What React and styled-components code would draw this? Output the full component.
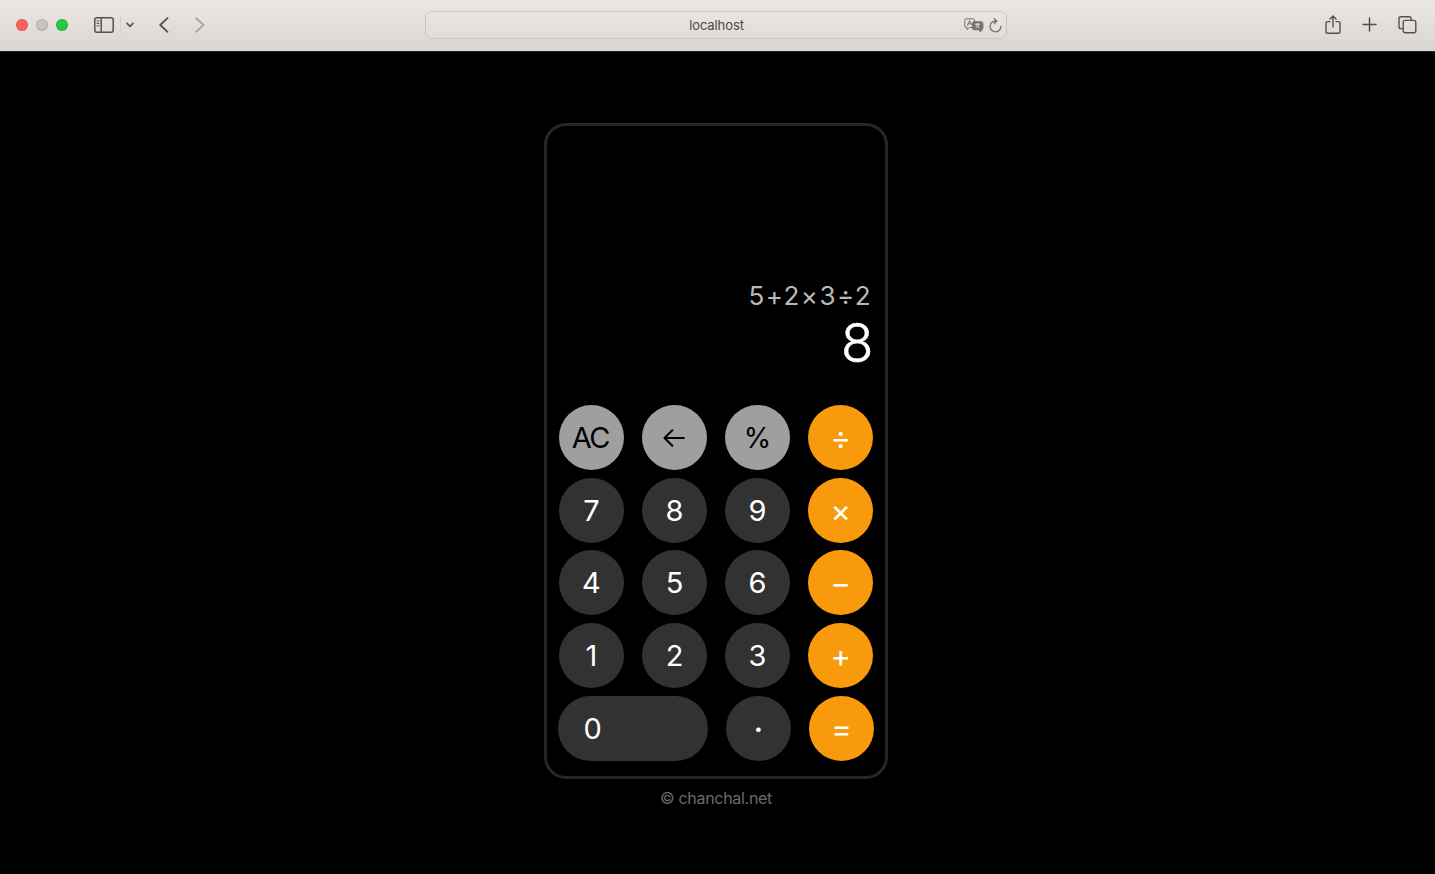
import React from "react";
import styled, { createGlobalStyle } from "styled-components";

const GlobalStyle = createGlobalStyle`
  * { box-sizing: border-box; }
  html, body { margin: 0; background: #000; }
  body { font-family: Inter, "Liberation Sans", sans-serif; overflow: hidden; }
  button { font: inherit; border: 0; padding: 0; }
`;

const Page = styled.div`
  height: 100vh;
  display: flex;
  flex-direction: column;
`;

const Toolbar = styled.header`
  flex: none;
  height: 52px;
  padding: 0 18px 2px 16px;
  display: grid;
  grid-template-columns: 1fr 582px 1fr;
  align-items: center;
  background: linear-gradient(#ebe6e4, #dbd5d2);
  border-bottom: 1px solid #222;
`;

const ToolGroup = styled.div`
  display: flex;
  align-items: center;
  justify-content: ${(p) => (p.$end ? "flex-end" : "flex-start")};
`;

const Lights = styled.div`
  display: flex;
  gap: 8px;
  margin: 1px 26px 0 0;
`;

const Light = styled.span`
  width: 12px;
  height: 12px;
  border-radius: 50%;
  background: ${(p) => p.$color};
  border: 0.5px solid rgba(0, 0, 0, 0.12);
`;

const Divider = styled.span`
  width: 1px;
  height: 18px;
  margin: 0 5px 0 6px;
  background: #d5cfcc;
`;

const Icon = styled.svg`
  display: block;
  flex: none;
  margin-left: ${(p) => p.$left || 0}px;
  fill: none;
  stroke: ${(p) => p.$color || "#56504d"};
  stroke-width: ${(p) => p.$weight || 1.5};
  stroke-linecap: round;
  stroke-linejoin: round;
`;

const Address = styled.div`
  height: 28px;
  margin: 0 0.5px 0 -0.5px;
  display: grid;
  grid-template-columns: 1fr auto 1fr;
  align-items: center;
  padding: 1px 4px 0 5px;
  border: 1px solid #cbc5c2;
  border-radius: 7px;
  background: rgba(255, 255, 255, 0.08);
  font-size: 13px;
  letter-spacing: -0.1px;
  color: #4b4745;
`;

const AddressText = styled.span`
  grid-column: 2;
`;

const Main = styled.main`
  flex: 1;
  display: flex;
  flex-direction: column;
  align-items: center;
  padding: 71px 3px 0 0;
`;

const Calculator = styled.section`
  flex: none;
  width: 344px;
  height: 656px;
  display: flex;
  flex-direction: column;
  border: 3px solid #262626;
  border-radius: 22px;
  padding: 0 11px 0 11.9px;
`;

const Display = styled.div`
  flex: none;
  height: 279px;
  padding: 152px 0 0;
  text-align: right;
`;

const Expression = styled.div`
  padding-right: 2px;
  color: #b9b9b9;
  font-size: 26px;
  line-height: 36px;
  letter-spacing: 1.45px;
`;

const Result = styled.div`
  padding-right: 0.5px;
  color: #fff;
  font-size: 53px;
  line-height: 58px;
  font-weight: 300;
  -webkit-text-stroke: 0.5px #fff;
`;

const Keys = styled.div`
  display: flex;
  flex-direction: column;
  gap: 7.7px;
`;

const KeyRow = styled.div`
  display: flex;
  gap: 18.1px;
  margin-left: ${(p) => (p.$last ? -0.5 : 0)}px;
`;

const tones = {
  light: { background: "#9f9f9f", color: "#000" },
  dark: { background: "#323232", color: "#fff" },
  orange: { background: "#f89a0b", color: "#fff" },
};

const Key = styled.button`
  flex: none;
  width: ${(p) => (p.$wide ? 149.4 : 65)}px;
  height: 65px;
  border-radius: 33px;
  display: flex;
  align-items: center;
  justify-content: ${(p) => (p.$wide ? "flex-start" : "center")};
  padding: ${(p) => p.$drop || 0}px ${(p) => (p.$tracking ? 2 : 0)}px 0
    ${(p) => (p.$wide ? 25 : 0)}px;
  background: ${(p) => tones[p.$tone].background};
  color: ${(p) => tones[p.$tone].color};
  font-size: ${(p) => p.$size || 29}px;
  font-weight: ${(p) => p.$weight || 400};
  letter-spacing: ${(p) => p.$tracking || 0}px;
  line-height: 1;
`;

const Credit = styled.footer`
  margin-top: 9px;
  color: #6b6b6b;
  font-size: 16px;
  line-height: 20px;
  letter-spacing: -0.3px;
`;

const op = { tone: "orange", size: 31 };
const rows = [
  [
    { label: "AC", tone: "light", tracking: -1.5 },
    { label: "←", tone: "light", icon: true, drop: 1 },
    { label: "%", tone: "light", size: 28, drop: 1 },
    { label: "÷", ...op },
  ],
  [{ label: "7" }, { label: "8" }, { label: "9" }, { label: "×", ...op }],
  [{ label: "4" }, { label: "5" }, { label: "6" }, { label: "−", ...op }],
  [{ label: "1" }, { label: "2" }, { label: "3" }, { label: "+", ...op }],
  [{ label: "0", wide: true }, { label: "·", weight: 600, drop: 2 }, { label: "=", ...op }],
];

function BackArrow() {
  return (
    <Icon width="22" height="18" viewBox="0 0 22 18" $color="#000" $weight={2}>
      <path d="M20.8 9H1.5M9.3 1.2L1.5 9l7.8 7.8" />
    </Icon>
  );
}

export default function App() {
  return (
    <Page>
      <GlobalStyle />
      <Toolbar>
        <ToolGroup>
          <Lights>
            <Light $color="#ff5f57" />
            <Light $color="#c9c4c1" />
            <Light $color="#28c840" />
          </Lights>
          <Icon width="20" height="16" viewBox="0 0 20 16">
            <rect x="0.8" y="0.8" width="18.4" height="14.4" rx="2" />
            <path d="M7.2 1v14" />
            <path d="M3 4h2M3 6.4h2M3 8.8h2" strokeWidth="1" />
          </Icon>
          <Divider />
          <Icon width="8" height="6" viewBox="0 0 8 6">
            <path d="M1 1.4l3 3 3-3" />
          </Icon>
          <Icon $left={25} width="10" height="16" viewBox="0 0 10 16" $weight={1.8}>
            <path d="M8.5 1.2L1.2 8l7.3 6.8" />
          </Icon>
          <Icon $left={26} width="10" height="16" viewBox="0 0 10 16" $weight={1.6} $color="#a19b98">
            <path d="M1.2 1.2L8.5 8l-7.3 6.8" />
          </Icon>
        </ToolGroup>
        <Address>
          <AddressText>localhost</AddressText>
          <ToolGroup $end>
            <Icon width="20" height="15" viewBox="0 0 20 15" $weight={1} $color="#77716e">
              <path d="M8 9.5H5.3L3 11.7V9.5H2.2Q.8 9.5.8 8V2.2Q.8.8 2.2.8h7q1.5 0 1.5 1.5v1" />
              <path d="M3.4 7.5l2.2-5 1.7 4M4.2 5.8h2.6" />
              <path d="M10 3.8h7.2q1.7 0 1.7 1.7v4.7q0 1.6-1.7 1.6H17v2.3l-2.5-2.3H10q-1.6 0-1.6-1.6V5.5q0-1.7 1.6-1.7z" fill="#77716e" />
              <path d="M11.4 6.2h4.4M13.6 5.2v1M12 9.7q2.5-1 3-3.3M15.2 9.7q-2.5-1-3-3.3" stroke="#e2dcd9" />
            </Icon>
            <Icon $left={5} width="13" height="15" viewBox="0 0 13 15" $weight={1.3} $color="#77716e">
              <path d="M11.9 8.4A5.4 5.4 0 1 1 6.5 3h1.2M5.3.7L7.8 3 5.3 5.5" />
            </Icon>
          </ToolGroup>
        </Address>
        <ToolGroup $end>
          <Icon width="16" height="20" viewBox="0 0 16 20" $weight={1.4}>
            <path d="M5 6.6H2.8Q1 6.6 1 8.4v8.1q0 1.8 1.8 1.8h10.4q1.8 0 1.8-1.8V8.4Q15 6.6 13.2 6.6H11M8 12V1.1M5 3.9l3-3 3 3" />
          </Icon>
          <Icon $left={21} width="15" height="15" viewBox="0 0 15 15">
            <path d="M7.5 1v13M1 7.5h13" />
          </Icon>
          <Icon $left={21} width="19" height="18" viewBox="0 0 19 18" $weight={1.4}>
            <rect x="5.2" y="4.4" width="12.6" height="12.4" rx="2" />
            <path d="M5 12.6H2.8Q1 12.6 1 10.8V2.6Q1 .8 2.8.8h8.5q1.8 0 1.8 1.8v1.5" />
          </Icon>
        </ToolGroup>
      </Toolbar>
      <Main>
        <Calculator>
          <Display>
            <Expression>5+2×3÷2</Expression>
            <Result>8</Result>
          </Display>
          <Keys>
            {rows.map((keys, i) => (
              <KeyRow key={i} $last={i === 4}>
                {keys.map((k) => (
                  <Key
                    key={k.label}
                    aria-label={k.label}
                    $tone={k.tone || "dark"}
                    $wide={k.wide}
                    $size={k.size}
                    $weight={k.weight}
                    $drop={k.drop}
                    $tracking={k.tracking}
                  >
                    {k.icon ? <BackArrow /> : k.label}
                  </Key>
                ))}
              </KeyRow>
            ))}
          </Keys>
        </Calculator>
        <Credit>© chanchal.net</Credit>
      </Main>
    </Page>
  );
}
